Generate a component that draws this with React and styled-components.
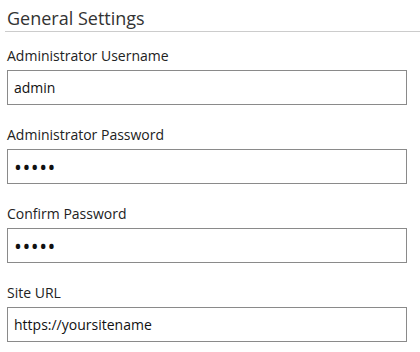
import React from 'react';
import styled, { createGlobalStyle } from 'styled-components';

const GlobalStyle = createGlobalStyle`
  body {
    margin: 0;
    background: #fff;
    font-family: "Open Sans", "Liberation Sans", sans-serif;
    color: #222;
  }
`;

const Section = styled.section`
  width: 415px;
  margin-left: 5px;
`;

const Heading = styled.h2`
  margin: 0;
  padding: 6px 0 1px 2px;
  font-size: 18px;
  font-weight: 400;
  line-height: 24px;
  color: #333;
  border-bottom: 1px solid #ccc;
`;

const Fields = styled.div`
  display: flex;
  flex-direction: column;
  gap: 20px;
  padding: 14px 0 0 2px;
`;

const Field = styled.label`
  display: flex;
  flex-direction: column;
  gap: 4px;
`;

const Label = styled.span`
  font-size: 14px;
  line-height: 20px;
  color: #222;
`;

const Input = styled.input`
  box-sizing: border-box;
  width: 400px;
  height: 35px;
  padding: 0 6px;
  border: 1px solid #8a8a8a;
  border-radius: 0;
  background: #fff;
  font-family: "Open Sans", "Liberation Sans", sans-serif;
  font-size: ${(p) => (p.type === 'password' ? '21px' : '14px')};
  letter-spacing: ${(p) => (p.type === 'password' ? '0.5px' : 'normal')};
  color: #111;
  outline: none;
`;

const fields = [
  { label: 'Administrator Username', type: 'text', value: 'admin' },
  { label: 'Administrator Password', type: 'password', value: 'admin' },
  { label: 'Confirm Password', type: 'password', value: 'admin' },
  { label: 'Site URL', type: 'text', value: 'https://yoursitename' },
];

export default function App() {
  return (
    <>
      <GlobalStyle />
      <Section>
        <Heading>General Settings</Heading>
        <Fields>
          {fields.map((f) => (
            <Field key={f.label}>
              <Label>{f.label}</Label>
              <Input type={f.type} defaultValue={f.value} readOnly />
            </Field>
          ))}
        </Fields>
      </Section>
    </>
  );
}
